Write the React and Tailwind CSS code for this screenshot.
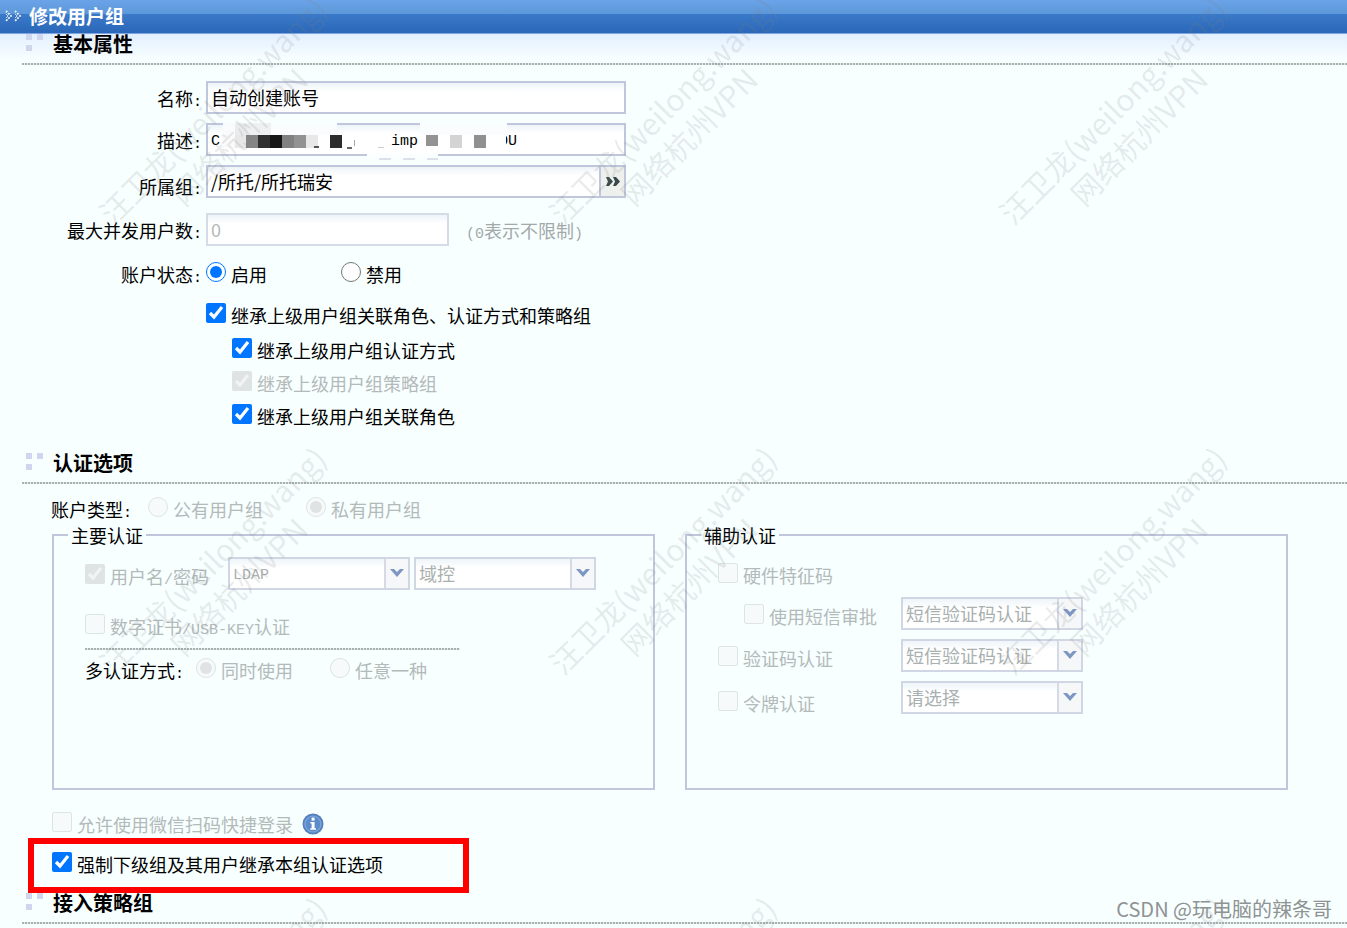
import { useState } from "react";

// Half-width Latin text sitting between Chinese characters
const Half = ({ children }) => (
  <span className="font-['Liberation_Mono',monospace] text-[15px] leading-none">{children}</span>
);

const SectionTitle = ({ children }) => (
  <div className="ml-[22px]">
    <div className="flex items-start pl-1 pb-[9px]">
      <svg className="w-[17px] h-[17px] mr-[10px]" viewBox="0 0 17 17" fill="#cfd6ee">
        <rect x="0" y="0" width="6" height="6" />
        <rect x="11" y="0" width="6" height="6" />
        <rect x="0" y="11" width="6" height="6" />
      </svg>
      <h2 className="text-[20px] leading-5 font-bold text-black">{children}</h2>
    </div>
    <DottedLine />
  </div>
);

const DottedLine = () => (
  <div className="h-[2px] bg-[repeating-linear-gradient(90deg,#a9b1b1_0_2px,#e3eaea_2px_3px)]"></div>
);

const Row = ({ id, label, low, children }) => (
  <div className={`flex ${low ? "items-end" : "items-center"}`}>
    <label htmlFor={id} className="w-[202px] mr-1 leading-6 text-right shrink-0">
      {label}
      <Half>:</Half>
    </label>
    {children}
  </div>
);

const Check = ({ label, checked = false, disabled, className = "" }) => {
  const [on, setOn] = useState(checked);
  return (
    <label
      className={`flex items-center gap-[5px] shrink-0 whitespace-nowrap ${
        disabled ? "text-[#b3baba]" : "text-black"
      } ${className}`}
    >
      <input
        type="checkbox"
        checked={on}
        disabled={disabled}
        onChange={(e) => setOn(e.target.checked)}
        className="size-5 mb-1 accent-[#0075ff] disabled:opacity-60"
      />
      <span>{label}</span>
    </label>
  );
};

const Radio = ({ name, label, checked, disabled, className = "" }) => (
  <label
    className={`flex items-center gap-[5px] shrink-0 whitespace-nowrap ${
      disabled ? "text-[#b3baba]" : "text-black"
    } ${className}`}
  >
    <input
      type="radio"
      name={name}
      defaultChecked={checked}
      disabled={disabled}
      className="size-5 mb-1 accent-[#0075ff] disabled:opacity-60"
    />
    <span>{label}</span>
  </label>
);

const Combo = ({ name, value, latin }) => (
  <div className="relative w-[182px] h-[33px] shrink-0">
    <select
      aria-label={name}
      disabled
      className={`block appearance-none w-full h-full pl-[3px] pr-7 border-2 border-[#d0d6e4] bg-linear-to-b from-[#eef5f9] to-white to-30% text-[#a9b0b0] opacity-100 ${
        latin ? "pt-[3px] font-['Liberation_Mono',monospace] text-[15px]" : "pb-[2px] text-[18px]"
      }`}
    >
      <option>{value}</option>
    </select>
    <span className="absolute right-[2px] inset-y-[2px] w-[24px] border-l-2 border-[#d5dae6] bg-[#f6f7f8] flex items-center justify-center pointer-events-none">
      <svg className="w-[14px] h-[9px]" viewBox="0 0 14 9">
        <path d="M0 0h4l3 3 3-3h4L7 8z" fill="#7d96c4" />
      </svg>
    </span>
  </div>
);

const InfoIcon = () => (
  <svg className="w-[22px] h-[22px] ml-[9px]" viewBox="0 0 22 22">
    <circle cx="11" cy="11" r="10.5" fill="#5580bd" />
    <circle cx="11" cy="11" r="8.6" fill="#7fa9dc" />
    <circle cx="11" cy="11" r="7.4" fill="#5c8bcb" />
    <rect x="9.6" y="4.6" width="3" height="3" fill="#fff" />
    <path d="M8.4 9h4.2v6.2h1.4v1.6H8.2v-1.6h1.4v-4.6H8.4z" fill="#fff" />
  </svg>
);

// [x, y, width, height, colour]
const blocks = [
  [17, 0, 12, 12, "#f9fcfc"],
  [29, 0, 12, 12, "#e9ecec"],
  [41, 0, 24, 12, "#eef1f1"],
  [65, 0, 66, 12, "#fafdfd"],
  [214, 0, 87, 12, "#fafdfd"],
  [17, 12, 12, 13, "#fafafa"],
  [29, 12, 12, 13, "#e8e8e8"],
  [40, 12, 12, 13, "#858585"],
  [52, 12, 12, 13, "#303030"],
  [64, 12, 12, 13, "#161616"],
  [76, 12, 12, 13, "#808080"],
  [88, 12, 12, 13, "#929292"],
  [100, 12, 12, 13, "#e8e8e8"],
  [108, 23, 5, 2, "#555555"],
  [124, 12, 12, 13, "#2c2c2c"],
  [141, 24, 5, 2, "#666666"],
  [148, 17, 1, 6, "#a5a5a5"],
  [172, 24, 6, 1, "#cccccc"],
  [220, 12, 12, 11, "#939393"],
  [244, 12, 12, 13, "#d4d4d4"],
  [268, 12, 12, 13, "#909090"],
  [282, 12, 18, 13, "#ffffff"],
  [161, 30, 71, 5, "#fcffff"],
  [173, 35, 12, 2, "#dbe1ea"],
  [197, 35, 12, 2, "#dbe1ea"],
  [221, 35, 11, 2, "#dbe1ea"],
];

const Mosaic = () => (
  <svg className="absolute left-0 top-0 w-[420px] h-[38px] pointer-events-none" viewBox="0 0 420 38">
    {blocks.map(([x, y, w, h, fill]) => (
      <rect key={`${x}-${y}`} x={x} y={y} width={w} height={h} fill={fill} />
    ))}
  </svg>
);

const Watermark = () => (
  <div
    aria-hidden="true"
    className="absolute inset-0 overflow-hidden pointer-events-none select-none"
  >
    <div className="-mt-[102px] grid grid-cols-[repeat(3,450px)] auto-rows-[450px] place-items-center">
      {Array.from({ length: 9 }, (_, i) => (
        <div
          key={i}
          className="-rotate-45 text-center whitespace-nowrap text-[30px] leading-[37px] text-[#808080]/17"
        >
          汪卫龙(weilong.wang)
          <br />
          网络杭州VPN
        </div>
      ))}
    </div>
  </div>
);

const inputStyle =
  "h-[33px] pl-[3px] border-2 bg-linear-to-b from-[#edf4f9] to-white to-30% outline-none";

const App = () => {
  const [name, setName] = useState("自动创建账号");
  const [desc, setDesc] = useState("C:" + " ".repeat(18) + "imp" + " ".repeat(9) + "OU");
  const [group, setGroup] = useState("/所托/所托瑞安");

  return (
    <div className="relative min-h-screen overflow-hidden bg-[#f8ffff] font-['Noto_Sans_CJK_SC',sans-serif] text-[18px] leading-7 text-black">
      {/* Title bar */}
      <header className="h-[34px] flex items-center pl-[5px] pb-[2px] border-b border-[#7ea6e4] bg-[linear-gradient(#6ba3e8_0,#5c98d9_14px,#3b79c9_14px,#2a67b8_33px)]">
        <svg className="w-[17px] h-[12px] mr-[7px]" viewBox="0 0 17 12" fill="none">
          <path d="M2 2l5 5-5 5M11 2l5 5-5 5" stroke="#35609c" strokeWidth="1" />
          <path d="M1 1l5 5-5 5M10 1l5 5-5 5" stroke="#dceafb" strokeWidth="2" strokeDasharray="2 1" />
          <path d="M1 4l2 2-2 2M10 4l2 2-2 2" stroke="#c3d9f5" strokeWidth="1" />
        </svg>
        <h1 className="text-[19px] font-bold text-white">修改用户组</h1>
      </header>

      <form onSubmit={(e) => e.preventDefault()}>
        {/* Basic attributes */}
        <section className="bg-[linear-gradient(#e2efff_0,#f8ffff_26px)]">
          <SectionTitle>基本属性</SectionTitle>
          <div className="pt-4 flex flex-col gap-[9px]">
            <Row id="name" label="名称">
              <input
                id="name"
                value={name}
                onChange={(e) => setName(e.target.value)}
                className={`${inputStyle} w-[420px] pb-[2px] border-[#c0c7dc]`}
              />
            </Row>
            <Row id="desc" label="描述">
              <div className="relative">
                <input
                  id="desc"
                  value={desc}
                  onChange={(e) => setDesc(e.target.value)}
                  className={`${inputStyle} block w-[420px] pt-[3px] border-[#c0c7dc] font-['Liberation_Mono',monospace] text-[15px]`}
                />
                <Mosaic />
              </div>
            </Row>
            <Row id="group" label="所属组" low>
              <div className="flex w-[420px]">
                <input
                  id="group"
                  value={group}
                  onChange={(e) => setGroup(e.target.value)}
                  className={`${inputStyle} flex-1 min-w-0 pb-[2px] border-[#c0c7dc] border-r-0`}
                />
                <button
                  type="button"
                  aria-label="选择所属组"
                  className="w-[27px] h-[33px] border-2 border-[#c0c7dc] bg-[#eef0ee] flex items-center justify-center"
                >
                  <svg className="w-[14px] h-[9px]" viewBox="0 0 14 9" fill="#39494b">
                    <path d="M0 0h3l4 4.500-4 4.500H0l2-4.500zM7 0h3l4 4.500-4 4.500H7l2-4.500z" />
                  </svg>
                </button>
              </div>
            </Row>
          </div>
          <div className="pt-[15px]">
            <Row id="max" label="最大并发用户数">
              <input
                id="max"
                value="0"
                disabled
                readOnly
                className={`${inputStyle} w-[243px] pb-[2px] border-[#d5dbe7] text-[#b3baba]`}
              />
              <span className="ml-[17px] text-[#a3a9a9]">
                <Half>(0</Half>表示不限制<Half>)</Half>
              </span>
            </Row>
          </div>
          <div role="radiogroup" aria-label="账户状态" className="pt-[14px] flex items-center">
            <span className="w-[202px] mr-1 text-right shrink-0">
              账户状态<Half>:</Half>
            </span>
            <Radio name="status" label="启用" checked className="w-[135px]" />
            <Radio name="status" label="禁用" />
          </div>
          <div className="pl-[206px] pt-[10px]">
            <Check label="继承上级用户组关联角色、认证方式和策略组" checked className="h-[33px]" />
            <div className="pl-[26px] pt-[2px]">
              <Check label="继承上级用户组认证方式" checked className="h-[33px]" />
              <Check label="继承上级用户组策略组" checked disabled className="h-[33px]" />
              <Check label="继承上级用户组关联角色" checked className="h-[33px]" />
            </div>
          </div>
        </section>

        {/* Authentication options */}
        <section className="pt-[21px]">
          <SectionTitle>认证选项</SectionTitle>
          <div role="radiogroup" aria-label="账户类型" className="pl-[51px] pt-[11px] flex items-center">
            <span className="mr-4">
              账户类型<Half>:</Half>
            </span>
            <Radio name="type" label="公有用户组" disabled className="w-[158px]" />
            <Radio name="type" label="私有用户组" checked disabled />
          </div>

          <div className="pl-[52px] pr-[59px] grid grid-cols-2 gap-[30px]">
            <fieldset className="min-w-0 min-h-[267px] border-2 border-[#c0c7dc] pl-[31px]">
              <legend className="ml-[-17px] px-[3px] leading-6">主要认证</legend>
              <div className="pt-[10px] flex items-end">
                <Check
                  label={
                    <>
                      用户名<Half>/</Half>密码
                    </>
                  }
                  checked
                  disabled
                  className="w-[143px]"
                />
                <div className="flex gap-1">
                  <Combo name="认证服务器类型" value="LDAP" latin />
                  <Combo name="认证服务器" value="域控" />
                </div>
              </div>
              <Check
                label={
                  <>
                    数字证书<Half>/USB-KEY</Half>认证
                  </>
                }
                disabled
                className="mt-[22px]"
              />
              <div className="w-[375px] mt-2 mb-[6px]">
                <DottedLine />
              </div>
              <div role="radiogroup" aria-label="多认证方式" className="flex items-center">
                <span className="mr-3">
                  多认证方式<Half>:</Half>
                </span>
                <Radio name="multi" label="同时使用" checked disabled className="w-[134px]" />
                <Radio name="multi" label="任意一种" disabled />
              </div>
            </fieldset>

            <fieldset className="min-w-0 border-2 border-[#c0c7dc] pl-[31px]">
              <legend className="ml-[-17px] px-[3px] leading-6">辅助认证</legend>
              <Check label="硬件特征码" disabled className="mt-[14px]" />
              <div className="mt-2 flex items-end">
                <Check label="使用短信审批" disabled className="w-[183px] pl-[26px]" />
                <Combo name="短信审批方式" value="短信验证码认证" />
              </div>
              <div className="mt-[9px] flex items-end">
                <Check label="验证码认证" disabled className="w-[183px]" />
                <Combo name="验证码方式" value="短信验证码认证" />
              </div>
              <div className="mt-[9px] h-[36px] flex items-start">
                <Check label="令牌认证" disabled className="w-[183px] self-end" />
                <Combo name="令牌" value="请选择" />
              </div>
            </fieldset>
          </div>

          <div className="pl-[52px] pt-5 flex items-center">
            <Check label="允许使用微信扫码快捷登录" disabled />
            <InfoIcon />
          </div>
          <div className="ml-[28px] w-[441px] border-6 border-[#ff0000] pl-[18px] pb-[3px]">
            <Check label="强制下级组及其用户继承本组认证选项" checked className="h-10" />
          </div>
        </section>

        {/* Policy group */}
        <section>
          <SectionTitle>接入策略组</SectionTitle>
        </section>
      </form>

      <Watermark />
      <div className="absolute right-[15px] bottom-[9px] text-[20px] leading-5 text-[#8f9393]">
        CSDN @玩电脑的辣条哥
      </div>
    </div>
  );
};

export default App;
